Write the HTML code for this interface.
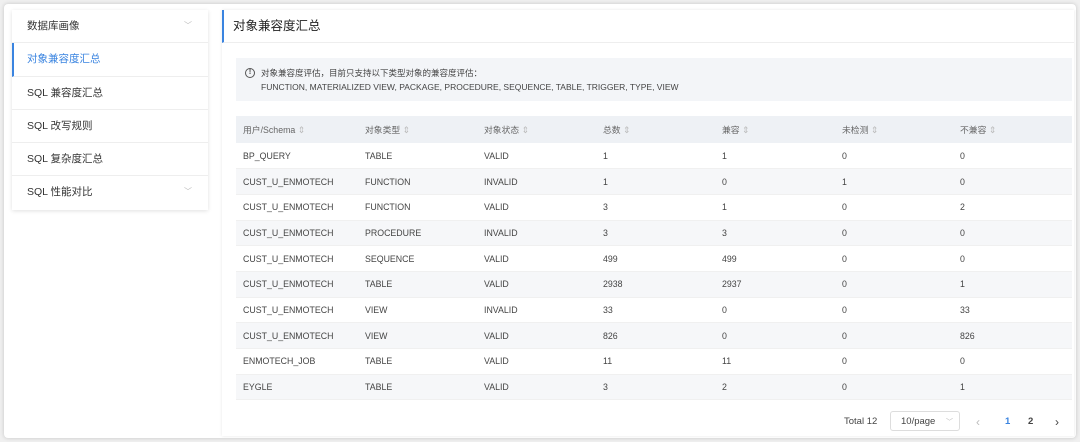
<!DOCTYPE html>
<html><head><meta charset="utf-8"><style>
*{box-sizing:border-box;margin:0;padding:0}
body{width:1080px;height:442px;background:#f0f0f0;font-family:"Liberation Sans","Noto Sans CJK SC",sans-serif;color:#333;position:relative;overflow:hidden}
.frame{position:absolute;left:4px;top:4px;width:1072px;height:434px;background:#fff;border-radius:4px;box-shadow:0 0 4px rgba(0,0,0,.18)}
.side{position:absolute;left:12px;top:10px;width:196px;height:200px;background:#fff;box-shadow:0 1px 4px rgba(0,0,0,.12)}
.side div{height:33.3px;line-height:33px;padding-left:15px;font-size:10.5px;color:#333;border-bottom:1px solid #eee;position:relative}
.side .act{color:#3a84e0;border-left:2px solid #3a84e0;padding-left:13px}
.side .chev{position:absolute;right:16px;top:-1px;color:#bbb;font-size:8px}
.main{position:absolute;left:222px;top:10px;width:852px;height:426px;background:#fff;box-shadow:0 0 3px rgba(0,0,0,.1)}
.hd{height:33px;border-left:2px solid #3a84e0;border-bottom:1px solid #eee;padding-left:9px;line-height:33px;font-size:12.5px;color:#222}
.notice{position:absolute;left:14px;top:48px;width:836px;height:43px;background:#f3f5f8;font-size:8.5px;color:#444;padding:8px 0 0 25px;line-height:14px}
.notice .i{position:absolute;left:9px;top:10px;width:10px;height:10px;border:1px solid #555;border-radius:50%;font-size:7px;line-height:8px;text-align:center;font-weight:bold}
table{position:absolute;left:14px;top:106px;width:836px;border-collapse:collapse;font-size:8.8px;color:#444}
th{height:27px;background:#eef1f5;text-align:left;font-weight:normal;color:#666;padding-left:7px}
td{height:25.7px;padding-left:7px;border-bottom:1px solid #f0f0f0}
tr.z td{background:#f6f7f9}
.s{color:#bbb;font-size:9px}
.pg{position:absolute;top:402px;font-size:9.5px;color:#444}
</style></head><body>
<div class="frame"></div>
<div class="side">
<div>数据库画像<span class="chev">﹀</span></div>
<div class="act">对象兼容度汇总</div>
<div>SQL 兼容度汇总</div>
<div>SQL 改写规则</div>
<div>SQL 复杂度汇总</div>
<div style="border:none">SQL 性能对比<span class="chev">﹀</span></div>
</div>
<div class="main">
<div class="hd">对象兼容度汇总</div>
<div class="notice"><span class="i">!</span>对象兼容度评估，目前只支持以下类型对象的兼容度评估：<br>FUNCTION, MATERIALIZED VIEW, PACKAGE, PROCEDURE, SEQUENCE, TABLE, TRIGGER, TYPE, VIEW</div>
<table>
<colgroup><col style="width:122px"><col style="width:119px"><col style="width:119px"><col style="width:119px"><col style="width:120px"><col style="width:118px"><col></colgroup>
<tr><th>用户/Schema <span class="s">⇕</span></th><th>对象类型 <span class="s">⇕</span></th><th>对象状态 <span class="s">⇕</span></th><th>总数 <span class="s">⇕</span></th><th>兼容 <span class="s">⇕</span></th><th>未检测 <span class="s">⇕</span></th><th>不兼容 <span class="s">⇕</span></th></tr>
<tr><td>BP_QUERY</td><td>TABLE</td><td>VALID</td><td>1</td><td>1</td><td>0</td><td>0</td></tr>
<tr class="z"><td>CUST_U_ENMOTECH</td><td>FUNCTION</td><td>INVALID</td><td>1</td><td>0</td><td>1</td><td>0</td></tr>
<tr><td>CUST_U_ENMOTECH</td><td>FUNCTION</td><td>VALID</td><td>3</td><td>1</td><td>0</td><td>2</td></tr>
<tr class="z"><td>CUST_U_ENMOTECH</td><td>PROCEDURE</td><td>INVALID</td><td>3</td><td>3</td><td>0</td><td>0</td></tr>
<tr><td>CUST_U_ENMOTECH</td><td>SEQUENCE</td><td>VALID</td><td>499</td><td>499</td><td>0</td><td>0</td></tr>
<tr class="z"><td>CUST_U_ENMOTECH</td><td>TABLE</td><td>VALID</td><td>2938</td><td>2937</td><td>0</td><td>1</td></tr>
<tr><td>CUST_U_ENMOTECH</td><td>VIEW</td><td>INVALID</td><td>33</td><td>0</td><td>0</td><td>33</td></tr>
<tr class="z"><td>CUST_U_ENMOTECH</td><td>VIEW</td><td>VALID</td><td>826</td><td>0</td><td>0</td><td>826</td></tr>
<tr><td>ENMOTECH_JOB</td><td>TABLE</td><td>VALID</td><td>11</td><td>11</td><td>0</td><td>0</td></tr>
<tr class="z"><td>EYGLE</td><td>TABLE</td><td>VALID</td><td>3</td><td>2</td><td>0</td><td>1</td></tr>
</table>
<span class="pg" style="left:622px;top:406px">Total 12</span>
<div class="pg" style="left:668px;top:401px;width:70px;height:20px;border:1px solid #ddd;border-radius:3px;padding:4px 0 0 10px">10/page <span style="color:#bbb;font-size:7px;margin-left:8px">﹀</span></div>
<span class="pg" style="left:754px;top:405px;color:#bbb;font-size:12px">‹</span>
<span class="pg" style="left:783px;top:406px;color:#3a84e0;font-weight:bold">1</span>
<span class="pg" style="left:806px;top:406px;font-weight:bold">2</span>
<span class="pg" style="left:833px;top:405px;font-size:12px">›</span>
</div>
</body></html>
